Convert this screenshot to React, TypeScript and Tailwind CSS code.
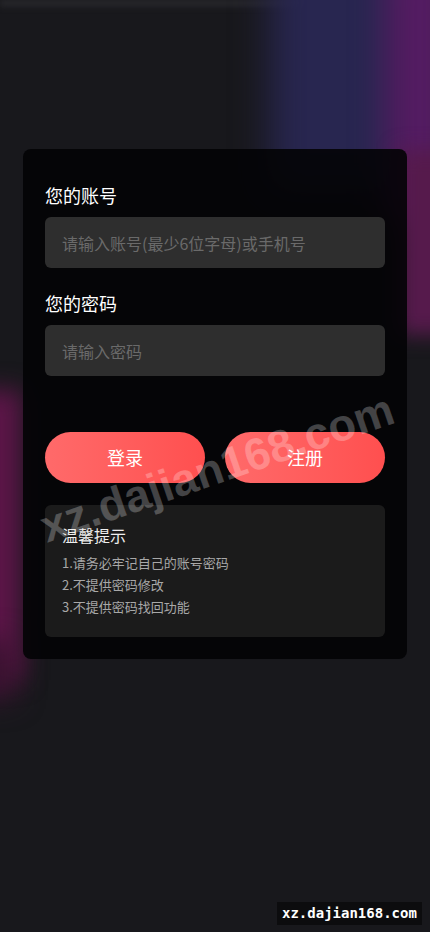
import React from "react";

const cjk = { fontFamily: '"Noto Sans CJK SC", "Noto Sans", sans-serif' };

export default function App() {
  return (
    <div className="relative w-full min-h-[932px] overflow-hidden bg-[#18181c]" style={cjk}>
      {/* background blobs */}
      <div className="absolute inset-0 pointer-events-none">
        <div className="absolute left-0 top-0 h-[6px] w-full bg-[#2a2a2e] blur-[3px]" />
        <div className="absolute left-[270px] top-[-40px] h-[230px] w-[150px] bg-[#282650] blur-[18px]" />
        <div className="absolute left-[385px] top-[-40px] h-[260px] w-[70px] bg-[#541c62] blur-[16px]" />
        <div className="absolute left-[398px] top-[150px] h-[185px] w-[60px] bg-[#561a4c] blur-[10px]" />
        <div className="absolute left-[-40px] top-[390px] h-[290px] w-[62px] bg-[#5c1548] blur-[12px]" />
        <div className="absolute left-[-30px] top-[640px] h-[60px] w-[45px] bg-[#3a1230] blur-[14px]" />
      </div>

      <div className="relative px-[23px] pt-[149px]">
        <div className="rounded-lg bg-[rgba(3,3,5,0.9)] px-[22px] pt-[34px] pb-[22px]">
          <div className="text-[18px] leading-6 text-white">您的账号</div>
          <input
            className="mt-[10px] h-[51px] w-full rounded-md bg-[#2e2e2e] px-[17px] text-[16px] text-white outline-none placeholder:text-[#6a6a6a]"
            placeholder="请输入账号(最少6位字母)或手机号"
          />
          <div className="mt-[23px] text-[18px] leading-6 text-white">您的密码</div>
          <input
            type="password"
            className="mt-[10px] h-[51px] w-full rounded-md bg-[#2e2e2e] px-[17px] text-[16px] text-white outline-none placeholder:text-[#6a6a6a]"
            placeholder="请输入密码"
          />
          <div className="mt-[56px] flex gap-5">
            <button className="h-[51px] flex-1 rounded-full bg-gradient-to-r from-[#ff6a6a] to-[#ff4f4f] text-[18px] text-white">
              登录
            </button>
            <button className="h-[51px] flex-1 rounded-full bg-gradient-to-r from-[#ff6a6a] to-[#ff4f4f] text-[18px] text-white">
              注册
            </button>
          </div>
          <div className="mt-[22px] rounded-md bg-[#1b1b1b] px-[17px] pt-[18px] pb-[19px]">
            <div className="text-[16px] leading-6 text-[#eeeeee]">温馨提示</div>
            <div className="mt-[5px] text-[13px] leading-[22px] text-[#a8a8a8]">
              <p>1.请务必牢记自己的账号密码</p>
              <p>2.不提供密码修改</p>
              <p>3.不提供密码找回功能</p>
            </div>
          </div>
        </div>
      </div>

      {/* watermark */}
      <div
        className="pointer-events-none absolute left-[217px] top-[468px] -translate-x-1/2 -translate-y-1/2 -rotate-[19deg] whitespace-nowrap text-[45px] font-bold text-white/25"
        style={{ fontFamily: '"Liberation Sans", Arial, sans-serif' }}
      >
        xz.dajian168.com
      </div>
      <div
        className="absolute left-[277px] top-[902px] bg-[#0c0c0e] px-[5px] text-[14px] font-bold leading-[23px] text-white"
        style={{ fontFamily: '"DejaVu Sans Mono", monospace' }}
      >
        xz.dajian168.com
      </div>
    </div>
  );
}
